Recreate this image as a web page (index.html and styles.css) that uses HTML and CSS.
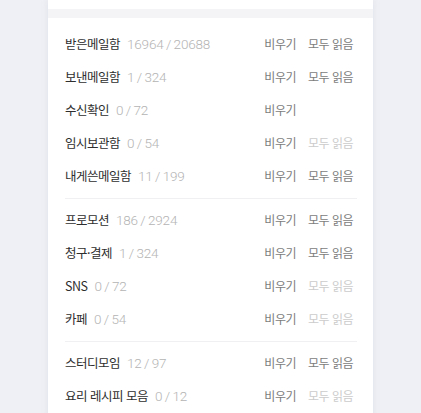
FILE: index.html
```html
<!DOCTYPE html>
<html lang="ko">
<head>
<meta charset="utf-8">
<link rel="stylesheet" href="styles.css">
</head>
<body>
<div class="page">
  <div class="card">
    <div class="card-top"></div>
    <div class="band"></div>
    <div class="list">
      <div class="group first">
        <div class="row"><span class="name">받은메일함<span class="count">16964 / 20688</span></span><span class="act">비우기</span><span class="act">모두 읽음</span></div>
        <div class="row"><span class="name">보낸메일함<span class="count">1 / 324</span></span><span class="act">비우기</span><span class="act">모두 읽음</span></div>
        <div class="row"><span class="name">수신확인<span class="count">0 / 72</span></span><span class="act">비우기</span><span class="act hidden">모두 읽음</span></div>
        <div class="row"><span class="name">임시보관함<span class="count">0 / 54</span></span><span class="act">비우기</span><span class="act off">모두 읽음</span></div>
        <div class="row"><span class="name">내게쓴메일함<span class="count">11 / 199</span></span><span class="act">비우기</span><span class="act">모두 읽음</span></div>
      </div>
      <div class="group">
        <div class="row"><span class="name">프로모션<span class="count">186 / 2924</span></span><span class="act">비우기</span><span class="act">모두 읽음</span></div>
        <div class="row"><span class="name">청구·결제<span class="count">1 / 324</span></span><span class="act">비우기</span><span class="act">모두 읽음</span></div>
        <div class="row"><span class="name">SNS<span class="count">0 / 72</span></span><span class="act">비우기</span><span class="act off">모두 읽음</span></div>
        <div class="row"><span class="name">카페<span class="count">0 / 54</span></span><span class="act">비우기</span><span class="act off">모두 읽음</span></div>
      </div>
      <div class="group">
        <div class="row"><span class="name">스터디모임<span class="count">12 / 97</span></span><span class="act">비우기</span><span class="act">모두 읽음</span></div>
        <div class="row"><span class="name">요리 레시피 모음<span class="count">0 / 12</span></span><span class="act">비우기</span><span class="act off">모두 읽음</span></div>
      </div>
    </div>
  </div>
</div>
</body>
</html>
```

FILE: styles.css
```css
html, body {
  margin: 0;
  padding: 0;
}
body {
  background: #eff0f5;
  font-family: "Noto Sans CJK KR", "Noto Sans", sans-serif;
  height: 413px;
  overflow: hidden;
}
.page {
  padding-left: 48px;
}
.card {
  width: 325px;
  background: #ffffff;
  box-shadow: 0 0 6px rgba(180, 185, 205, 0.25);
  min-height: 413px;
}
.card-top {
  height: 9px;
  background: #ffffff;
}
.band {
  height: 9px;
  background: #f4f4f7;
}
.list {
  padding: 0 16px 0 17px;
}
.group {
  padding: 4px 0 6px;
  border-top: 1px solid #f0f0f2;
}
.group.first {
  padding-top: 9px;
  border-top: none;
}
.row {
  display: grid;
  grid-template-columns: 1fr auto auto;
  column-gap: 12px;
  align-items: center;
  height: 33px;
  padding-right: 4px;
  font-size: 12px;
  letter-spacing: -0.5px;
}
.name {
  color: #2e2e2e;
  font-size: 12.5px;
}
.count {
  color: #b4b4b4;
  margin-left: 7px;
  font-family: "Roboto", "Noto Sans", sans-serif;
  font-weight: 300;
  font-size: 13.5px;
  letter-spacing: -0.2px;
  word-spacing: -0.6px;
}
.act {
  color: #7c7c7c;
}
.act.off {
  color: #cccccc;
}
.act.hidden {
  visibility: hidden;
}
```
